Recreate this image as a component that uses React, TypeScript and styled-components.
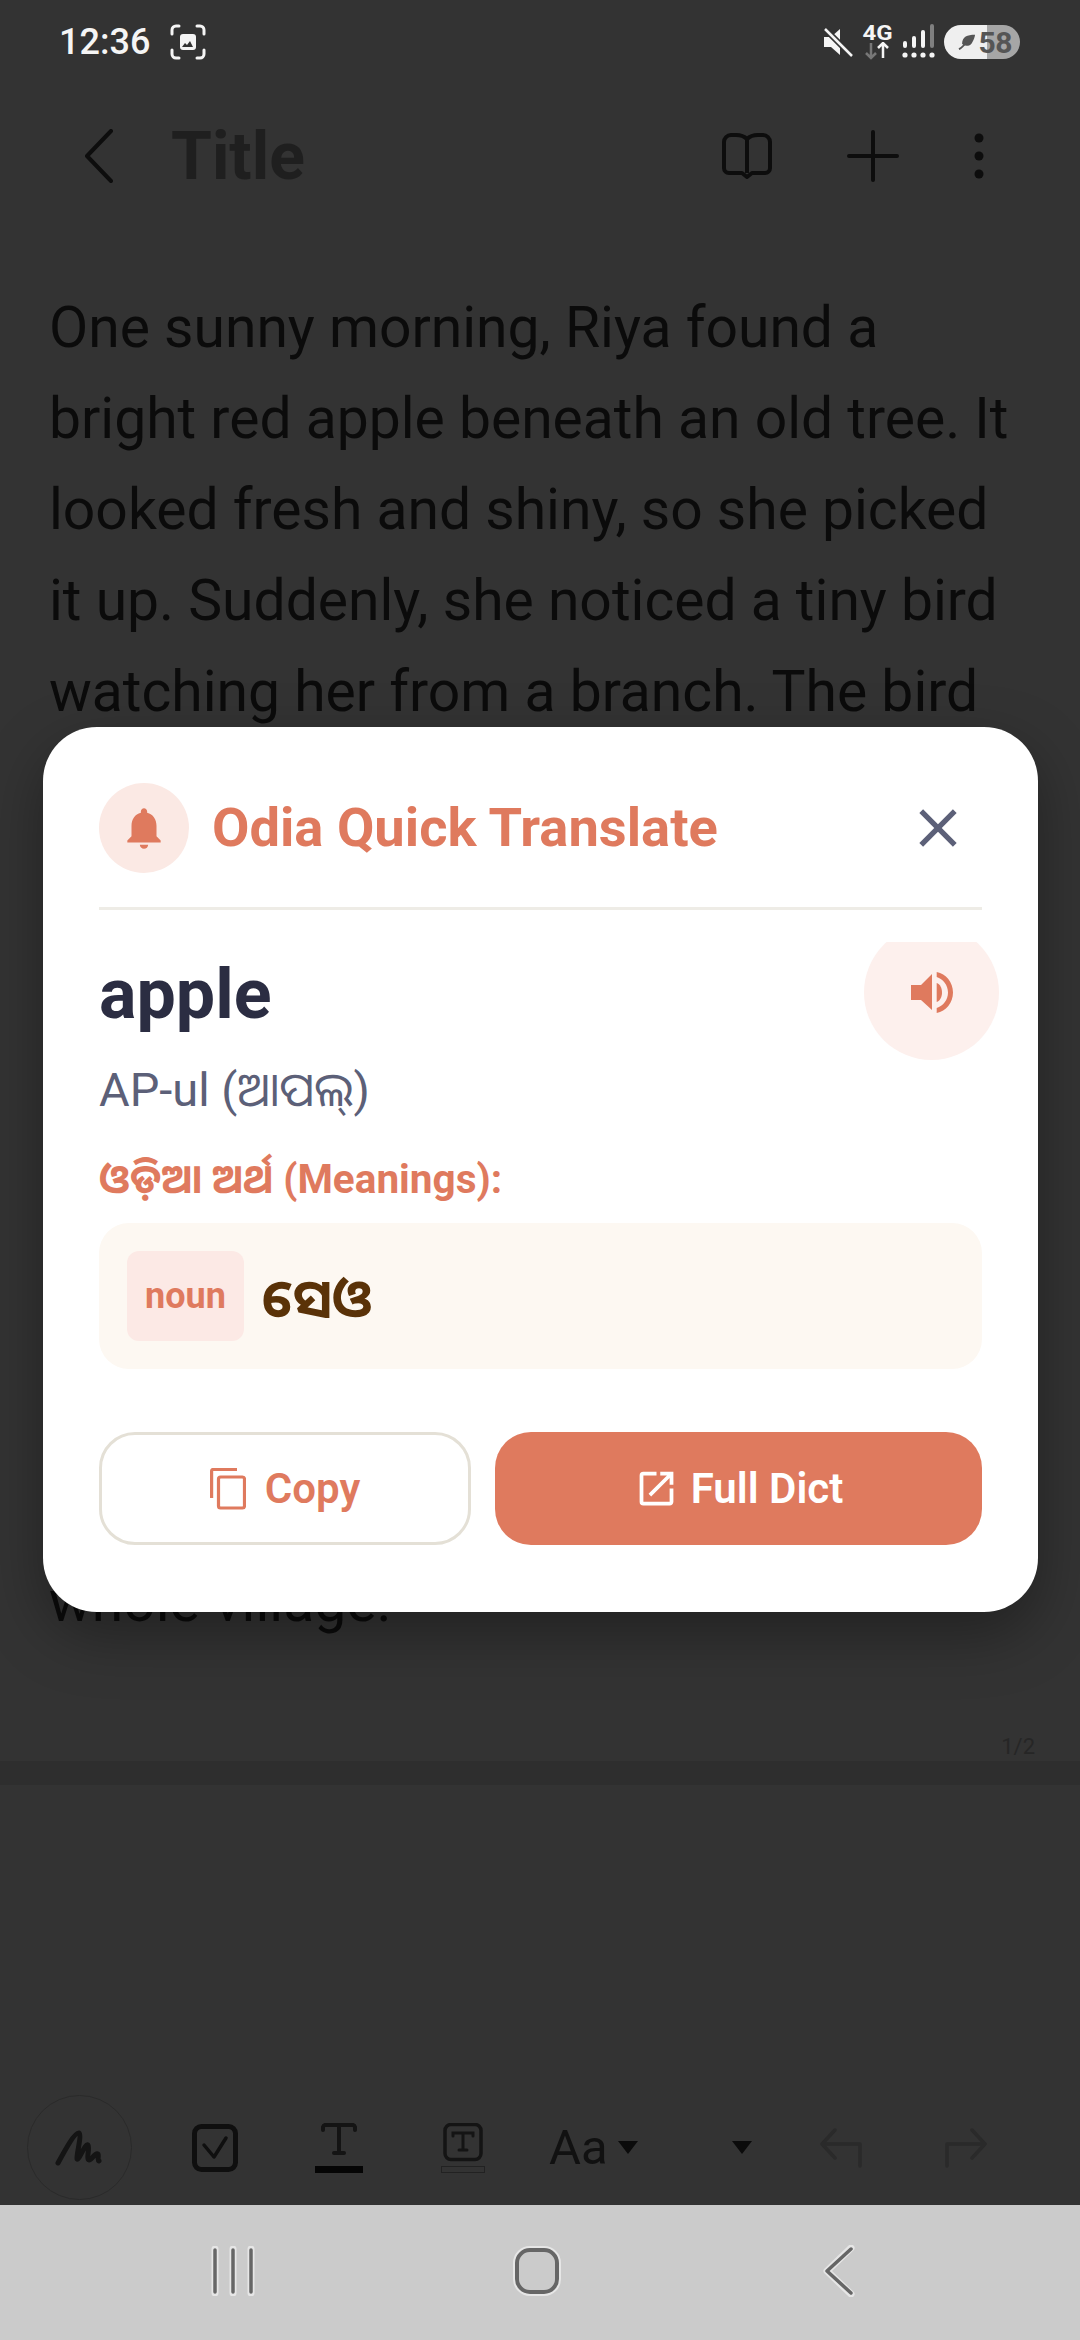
import React from "react";
import styled, { createGlobalStyle } from "styled-components";
import { MdNotifications, MdClose, MdOpenInNew } from "react-icons/md";

const GlobalStyle = createGlobalStyle`
  html, body { margin: 0; padding: 0; background: #333333; }
  * { box-sizing: border-box; }
`;

const uiFont = `Roboto, "Noto Sans Oriya", "Noto Sans", "DejaVu Sans", sans-serif`;

const Screen = styled.div`
  position: relative;
  width: 1080px;
  height: 2340px;
  overflow: hidden;
  display: flex;
  flex-direction: column;
  background: #333333;
  font-family: ${uiFont};
`;

const StatusBar = styled.div`
  height: 84px;
  padding: 0 60px 0 59px;
  display: flex;
  align-items: center;
  justify-content: space-between;
  color: #f5f5f5;
`;

const StatusGroup = styled.div<{ $gap: number }>`
  display: flex;
  align-items: center;
  gap: ${(p) => p.$gap}px;
`;

const Clock = styled.span`
  font-size: 36px;
  font-weight: 500;
`;

const NetworkBlock = styled.div`
  width: 32px;
  display: flex;
  flex-direction: column;
  align-items: center;
`;

const NetworkLabel = styled.span`
  font-size: 20px;
  line-height: 17px;
  font-weight: 700;
  transform: scaleX(1.2);
`;

const BatteryPill = styled.div`
  width: 76px;
  height: 34px;
  border-radius: 17px;
  overflow: hidden;
  display: flex;
  align-items: center;
  justify-content: flex-end;
  padding-right: 8px;
  background: linear-gradient(to right, #efefef 57%, #a6a6a6 57%);
  color: #555555;
  font-size: 30px;
  font-weight: 700;
  letter-spacing: -0.5px;
`;

const TitleBar = styled.div`
  height: 142px;
  padding: 2px 96px 0 85px;
  display: flex;
  align-items: center;
`;

const PageTitle = styled.div`
  margin-left: 58px;
  flex: 1;
  font-size: 66px;
  font-weight: 700;
  color: #1f1f1f;
`;

const TitleActions = styled.div`
  display: flex;
  align-items: center;
  gap: 75px;
`;

const Article = styled.div`
  padding: 56px 49px 0;
  height: 1507px;
  font-size: 57px;
  line-height: 91px;
  color: #0b0b0b;
`;

const ArticleLine = styled.div`
  white-space: nowrap;
`;

const HiddenLines = styled.div`
  height: 819px;
`;

const PageCount = styled.div`
  height: 28px;
  padding-right: 45px;
  text-align: right;
  font-size: 22px;
  line-height: 28px;
  color: #262626;
`;

const Band = styled.div`
  height: 24px;
  background: #2e2e2e;
`;

const Spacer = styled.div`
  flex: 1;
`;

const Toolbar = styled.div`
  height: 112px;
  padding: 0 0 3px 27px;
  display: flex;
  align-items: center;
`;

const PenCircle = styled.div`
  width: 105px;
  height: 105px;
  border-radius: 50%;
  border: 1.5px solid #2a2a2a;
  display: flex;
  align-items: center;
  justify-content: center;
`;

const ToolSlot = styled.div<{ $before: number }>`
  margin-left: ${(p) => p.$before}px;
  display: flex;
  align-items: center;
`;

const FontLabel = styled.span`
  font-size: 49px;
  line-height: 1;
  color: #111111;
  font-weight: 400;
`;

const Caret = styled.span<{ $before?: number }>`
  width: 0;
  height: 0;
  margin-left: ${(p) => p.$before ?? 0}px;
  border-left: 10px solid transparent;
  border-right: 10px solid transparent;
  border-top: 13px solid #0b0b0b;
`;

const NavBar = styled.div`
  height: 135px;
  padding-bottom: 4px;
  background: #cbcbcb;
  display: grid;
  grid-template-columns: 466px 229px 1fr;
  align-items: center;
`;

const NavCell = styled.div<{ $pad: number }>`
  padding-left: ${(p) => p.$pad}px;
  display: flex;
`;

const Sheet = styled.div`
  position: absolute;
  left: 43px;
  top: 727px;
  width: 995px;
  height: 885px;
  padding: 57px 56px 0;
  background: #ffffff;
  border-radius: 54px;
  box-shadow: 0 22px 60px rgba(0, 0, 0, 0.34);
`;

const SheetHeader = styled.div`
  height: 126px;
  padding-bottom: 36px;
  display: flex;
  align-items: center;
  border-bottom: 3px solid #eeece6;
`;

const BellBadge = styled.div`
  width: 90px;
  height: 90px;
  border-radius: 50%;
  background: #fbe9e4;
  color: #df7a5e;
  display: flex;
  align-items: center;
  justify-content: center;
`;

const SheetTitle = styled.div`
  margin-left: 23px;
  flex: 1;
  font-size: 54.3px;
  font-weight: 700;
  color: #df7a5e;
`;

const CloseButton = styled.div`
  width: 64px;
  display: flex;
  justify-content: center;
  color: #5c6078;
  margin-right: 12px;
`;

const WordRow = styled.div`
  margin-top: 32px;
  height: 118px;
  display: flex;
  justify-content: space-between;
  clip-path: inset(0 -20px 0 0);
`;

const Word = styled.div`
  margin-top: 10px;
  font-size: 70px;
  font-weight: 700;
  line-height: 84px;
  color: #2b2d42;
`;

const SpeakButton = styled.div`
  flex: none;
  width: 135px;
  height: 135px;
  margin: -17px -17px 0 0;
  border-radius: 50%;
  background: #fdf0ed;
  display: flex;
  align-items: center;
  justify-content: center;
`;

const Phonetic = styled.div`
  font-size: 47px;
  line-height: 60px;
  margin-top: 0;
  color: #5c6078;
`;

const MeaningsLabel = styled.div`
  margin-top: 36px;
  font-size: 40.5px;
  font-weight: 700;
  line-height: 46px;
  color: #df7a5e;
`;

const MeaningBox = styled.div`
  margin-top: 21px;
  height: 146px;
  padding: 0 28px;
  display: flex;
  align-items: center;
  gap: 18px;
  border-radius: 30px;
  background: #fdf8f2;
`;

const PosChip = styled.div`
  width: 117px;
  height: 90px;
  border-radius: 12px;
  background: #fce9e5;
  color: #df7a5e;
  font-size: 36px;
  font-weight: 700;
  display: flex;
  align-items: center;
  justify-content: center;
`;

const MeaningText = styled.div`
  font-size: 53px;
  font-weight: 700;
  color: #5a3208;
`;

const ButtonRow = styled.div`
  margin-top: 63px;
  display: grid;
  grid-template-columns: 372px 487px;
  gap: 24px;
`;

const ActionButton = styled.div<{ $primary?: boolean }>`
  height: 113px;
  border-radius: 36px;
  display: flex;
  align-items: center;
  justify-content: center;
  gap: ${(p) => (p.$primary ? 12 : 19)}px;
  font-size: 42px;
  font-weight: 600;
  color: ${(p) => (p.$primary ? "#ffffff" : "#df7a5e")};
  background: ${(p) => (p.$primary ? "#df7a5e" : "#ffffff")};
  border: ${(p) => (p.$primary ? "none" : "3px solid #e4e0d6")};
`;

const ScreenshotIcon = () => (
  <svg width="36" height="36" viewBox="0 0 36 36" fill="none" stroke="#f5f5f5" strokeWidth="3" strokeLinecap="round">
    <path d="M9 2H6a4 4 0 0 0-4 4v4M27 2h3a4 4 0 0 1 4 4v4M9 34H6a4 4 0 0 1-4-4v-4M27 34h3a4 4 0 0 0 4-4v-4" />
    <rect x="10" y="10" width="16" height="16" rx="3" fill="#f5f5f5" stroke="none" />
    <path d="M12 23l3-4 2 2 3-4 3 6z" fill="#333" stroke="none" />
  </svg>
);

const MuteIcon = () => (
  <svg width="32" height="32" viewBox="0 0 32 32">
    <path d="M2 11h7l9-8v26l-9-8H2z" fill="#f5f5f5" />
    <path d="M3 3l27 27" stroke="#333" strokeWidth="6" />
    <path d="M3 3l27 27" stroke="#f5f5f5" strokeWidth="2.5" />
  </svg>
);

const TransferArrows = () => (
  <svg width="32" height="18" viewBox="0 0 32 18">
    <path d="M9 1v15M4 11l5 5 5-5" fill="none" stroke="#777" strokeWidth="2.5" />
    <path d="M21 16V1M16 6l5-5 5 5" fill="none" stroke="#f5f5f5" strokeWidth="2.5" />
  </svg>
);

const SignalIcon = () => (
  <svg width="34" height="36" viewBox="0 0 34 36">
    <rect x="1" y="17" width="4" height="7" rx="2" fill="#f5f5f5" />
    <rect x="10" y="12" width="4" height="12" rx="2" fill="#f5f5f5" />
    <rect x="19" y="6" width="4" height="18" rx="2" fill="#f5f5f5" />
    <rect x="28" y="0" width="4" height="24" rx="2" fill="#808080" />
    {[3, 12, 21, 30].map((x) => (
      <circle key={x} cx={x} cy="31" r="2.6" fill="#f5f5f5" />
    ))}
  </svg>
);

const LeafIcon = () => (
  <svg width="18" height="18" viewBox="0 0 20 20" style={{ marginRight: 3 }}>
    <path d="M19 2C10 2 5 4 4.500 12c2 3 9 3 11-1 2-3 3-6 3.500-9z" fill="#555" />
    <path d="M1 18c3-1 5-4 9-8" stroke="#555" strokeWidth="2" fill="none" />
  </svg>
);

const BackChevron = () => (
  <svg width="28" height="54" viewBox="0 0 28 54" fill="none" stroke="#0d0d0d" strokeWidth="4" strokeLinecap="round" strokeLinejoin="round">
    <path d="M26 2L2 27l24 25" />
  </svg>
);

const BookIcon = () => (
  <svg width="50" height="46" viewBox="0 0 50 46" fill="none" stroke="#0d0d0d" strokeWidth="4" strokeLinejoin="round">
    <path d="M25 6c-3-3-7-4-11-4H9a7 7 0 0 0-7 7v26a5 5 0 0 0 5 5h13l5 4 5-4h13a5 5 0 0 0 5-5V9a7 7 0 0 0-7-7h-5c-4 0-8 1-11 4v34" />
  </svg>
);

const PlusIcon = () => (
  <svg width="52" height="52" viewBox="0 0 52 52" stroke="#0d0d0d" strokeWidth="4" strokeLinecap="round">
    <path d="M26 2v48M2 26h48" />
  </svg>
);

const DotsIcon = () => (
  <svg width="10" height="46" viewBox="0 0 10 46" fill="#0d0d0d">
    <circle cx="5" cy="5" r="4.500" />
    <circle cx="5" cy="23" r="4.500" />
    <circle cx="5" cy="41" r="4.500" />
  </svg>
);

const PenIcon = () => (
  <svg width="50" height="36" viewBox="0 0 50 36" fill="none" stroke="#141414" strokeWidth="5" strokeLinecap="round" strokeLinejoin="round">
    <path d="M3 33C10 20 20 2 24 3c3 2-3 24-2 26 2 2 8-16 11-14 2 2-2 14 1 15 3 0 6-8 9-6 1 2-1 6 1 7" />
  </svg>
);

const CheckBoxIcon = () => (
  <svg width="46" height="48" viewBox="0 0 46 48" fill="none" stroke="#0f0f0f">
    <rect x="2.500" y="2.500" width="41" height="43" rx="7" strokeWidth="5" />
    <path d="M12 21l10 12 12-19" strokeWidth="3.500" strokeLinecap="round" strokeLinejoin="round" />
  </svg>
);

const TextColorIcon = () => (
  <svg width="48" height="52" viewBox="0 0 48 52" fill="none" stroke="#141414" strokeWidth="4" strokeLinecap="round">
    <path d="M8 8V5a3 3 0 0 1 2-2h28a3 3 0 0 1 2 2v3M24 3v27M19 31h10" />
    <rect x="0" y="44" width="48" height="7" fill="#050505" stroke="none" />
  </svg>
);

const TextBoxIcon = () => (
  <svg width="44" height="50" viewBox="0 0 44 50" fill="none" stroke="#141414">
    <rect x="4" y="1.500" width="36" height="35" rx="6" strokeWidth="3.500" />
    <path d="M12 13v-3h20v3M22 10v17M18 27h8" strokeWidth="3" strokeLinecap="round" />
    <rect x="0.500" y="43.500" width="43" height="6" stroke="#222" strokeWidth="1" />
  </svg>
);

const UndoIcon = () => (
  <svg width="44" height="40" viewBox="0 0 44 40" fill="none" stroke="#2a2a2a" strokeWidth="3.500" strokeLinecap="round" strokeLinejoin="round">
    <path d="M15 2L2 16l13 14M2 16h38v22" />
  </svg>
);

const RedoIcon = () => (
  <svg width="44" height="40" viewBox="0 0 44 40" fill="none" stroke="#2a2a2a" strokeWidth="3.500" strokeLinecap="round" strokeLinejoin="round">
    <path d="M29 2l13 14-13 14M42 16H4v22" />
  </svg>
);

const RecentsIcon = () => (
  <svg width="44" height="50" viewBox="0 0 44 50" strokeLinecap="round">
    {[4, 22, 40].map((x) => (
      <g key={x}>
        <path d={`M${x} 3v44`} stroke="#e6e6e6" strokeWidth="7" />
        <path d={`M${x} 4v42`} stroke="#666666" strokeWidth="3.500" />
      </g>
    ))}
  </svg>
);

const HomeIcon = () => (
  <svg width="48" height="50" viewBox="0 0 48 50" fill="none">
    <rect x="3" y="3" width="42" height="44" rx="14" stroke="#e6e6e6" strokeWidth="6" />
    <rect x="4" y="4" width="40" height="42" rx="13" stroke="#666666" strokeWidth="4" />
  </svg>
);

const NavBackIcon = () => (
  <svg width="32" height="52" viewBox="0 0 32 52" fill="none" strokeLinecap="round" strokeLinejoin="round">
    <path d="M28 3L4 26l24 23" stroke="#e6e6e6" strokeWidth="7" />
    <path d="M28 4L4 26l24 22" stroke="#666666" strokeWidth="3.500" />
  </svg>
);

const SpeakerIcon = () => (
  <svg width="42" height="41" viewBox="0 0 42 41" fill="#df7a5e">
    <path d="M0 13h10L21 2v36L10 28H0z" />
    <path d="M25.700 11C29 12 31 16 31 20.500S29 29 25.700 30z" />
    <path d="M25.700 0C35 2 42 10 42 20.500S35 39 25.700 41v-5C32 34 37 28 37 20.500S32 7 25.700 5z" />
  </svg>
);

const CopyIcon = () => (
  <svg width="36" height="42" viewBox="0 0 36 42" fill="none" stroke="#df7a5e" strokeWidth="3.200" strokeLinejoin="round">
    <path d="M1.600 30V3a1.500 1.500 0 0 1 1.500-1.500H27" />
    <rect x="8.500" y="9" width="26" height="31" rx="2" />
  </svg>
);

export default function App() {
  return (
    <Screen>
      <GlobalStyle />
      <StatusBar>
        <StatusGroup $gap={20}>
          <Clock>12:36</Clock>
          <ScreenshotIcon />
        </StatusGroup>
        <StatusGroup $gap={8}>
          <MuteIcon />
          <NetworkBlock>
            <NetworkLabel>4G</NetworkLabel>
            <TransferArrows />
          </NetworkBlock>
          <SignalIcon />
          <BatteryPill>
            <LeafIcon />
            58
          </BatteryPill>
        </StatusGroup>
      </StatusBar>
      <TitleBar>
        <BackChevron />
        <PageTitle>Title</PageTitle>
        <TitleActions>
          <BookIcon />
          <PlusIcon />
          <DotsIcon />
        </TitleActions>
      </TitleBar>
      <Article>
        <ArticleLine>One sunny morning, Riya found a</ArticleLine>
        <ArticleLine>bright red apple beneath an old tree. It</ArticleLine>
        <ArticleLine>looked fresh and shiny, so she picked</ArticleLine>
        <ArticleLine>it up. Suddenly, she noticed a tiny bird</ArticleLine>
        <ArticleLine>watching her from a branch. The bird</ArticleLine>
        <HiddenLines />
        <ArticleLine>whole village.</ArticleLine>
      </Article>
      <PageCount>1/2</PageCount>
      <Band />
      <Spacer />
      <Toolbar>
        <PenCircle>
          <PenIcon />
        </PenCircle>
        <ToolSlot $before={60}>
          <CheckBoxIcon />
        </ToolSlot>
        <ToolSlot $before={77}>
          <TextColorIcon />
        </ToolSlot>
        <ToolSlot $before={78}>
          <TextBoxIcon />
        </ToolSlot>
        <ToolSlot $before={64}>
          <FontLabel>Aa</FontLabel>
          <Caret $before={10} />
        </ToolSlot>
        <ToolSlot $before={94}>
          <Caret />
        </ToolSlot>
        <ToolSlot $before={68}>
          <UndoIcon />
        </ToolSlot>
        <ToolSlot $before={79}>
          <RedoIcon />
        </ToolSlot>
      </Toolbar>
      <NavBar>
        <NavCell $pad={211}>
          <RecentsIcon />
        </NavCell>
        <NavCell $pad={47}>
          <HomeIcon />
        </NavCell>
        <NavCell $pad={128}>
          <NavBackIcon />
        </NavCell>
      </NavBar>
      <Sheet>
        <SheetHeader>
          <BellBadge>
            <MdNotifications size={50} />
          </BellBadge>
          <SheetTitle>Odia Quick Translate</SheetTitle>
          <CloseButton>
            <MdClose size={64} />
          </CloseButton>
        </SheetHeader>
        <WordRow>
          <Word>apple</Word>
          <SpeakButton>
            <SpeakerIcon />
          </SpeakButton>
        </WordRow>
        <Phonetic>AP-ul (ଆପଲ୍)</Phonetic>
        <MeaningsLabel>ଓଡ଼ିଆ ଅର୍ଥ (Meanings):</MeaningsLabel>
        <MeaningBox>
          <PosChip>noun</PosChip>
          <MeaningText>ସେଓ</MeaningText>
        </MeaningBox>
        <ButtonRow>
          <ActionButton>
            <CopyIcon />
            Copy
          </ActionButton>
          <ActionButton $primary>
            <MdOpenInNew size={45} />
            Full Dict
          </ActionButton>
        </ButtonRow>
      </Sheet>
    </Screen>
  );
}
